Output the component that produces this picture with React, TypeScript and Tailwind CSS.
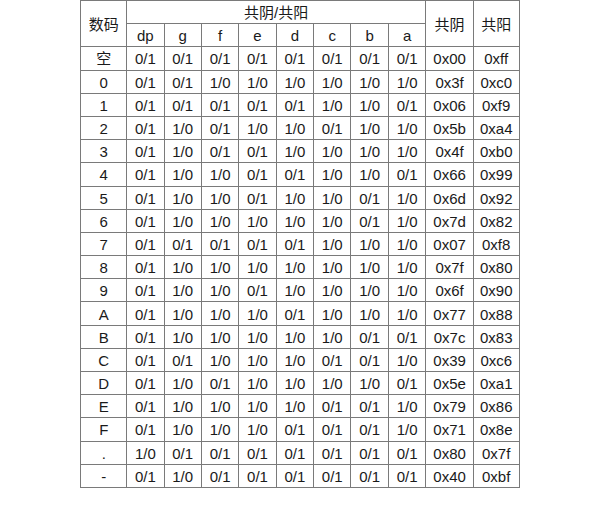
import React from 'react';

const segs = ['dp', 'g', 'f', 'e', 'd', 'c', 'b', 'a'];

// digit, segment bits dp..a (1 = lit on common-cathode), cathode code, anode code
const rows: [string, string, string, string][] = [
  ['空', '00000000', '0x00', '0xff'],
  ['0', '00111111', '0x3f', '0xc0'],
  ['1', '00000110', '0x06', '0xf9'],
  ['2', '01011011', '0x5b', '0xa4'],
  ['3', '01001111', '0x4f', '0xb0'],
  ['4', '01100110', '0x66', '0x99'],
  ['5', '01101101', '0x6d', '0x92'],
  ['6', '01111101', '0x7d', '0x82'],
  ['7', '00000111', '0x07', '0xf8'],
  ['8', '01111111', '0x7f', '0x80'],
  ['9', '01101111', '0x6f', '0x90'],
  ['A', '01110111', '0x77', '0x88'],
  ['B', '01111100', '0x7c', '0x83'],
  ['C', '00111001', '0x39', '0xc6'],
  ['D', '01011110', '0x5e', '0xa1'],
  ['E', '01111001', '0x79', '0x86'],
  ['F', '01110001', '0x71', '0x8e'],
  ['.', '10000000', '0x80', '0x7f'],
  ['-', '01000000', '0x40', '0xbf'],
];

const cell = 'border border-[#7a7a7a] text-center align-middle p-0 pt-px';

export default function App() {
  return (
    <div className="w-[600px] h-[512px] bg-white">
      <table
        className="mx-auto w-[438px] table-fixed border-collapse text-[15px] leading-none text-[#1a1a1a]"
        style={{ fontFamily: '"Liberation Sans", Arial, "Noto Sans CJK SC", sans-serif' }}
      >
        <colgroup>
          <col className="w-[45.7px]" />
          {segs.map((s) => (
            <col key={s} className="w-[37.4px]" />
          ))}
          <col className="w-[47.6px]" />
          <col className="w-[45.7px]" />
        </colgroup>
        <thead>
          <tr className="h-[23.2px]">
            <th rowSpan={2} className={`${cell} font-normal`}>数码</th>
            <th colSpan={8} className={`${cell} font-normal`}>共阴/共阳</th>
            <th rowSpan={2} className={`${cell} font-normal`}>共阴</th>
            <th rowSpan={2} className={`${cell} font-normal`}>共阳</th>
          </tr>
          <tr className="h-[23.2px]">
            {segs.map((s) => (
              <th key={s} className={`${cell} font-normal`}>{s}</th>
            ))}
          </tr>
        </thead>
        <tbody>
          {rows.map(([label, bits, cc, ca]) => (
            <tr key={label} className="h-[23.2px]">
              <td className={cell}>{label}</td>
              {bits.split('').map((b, i) => (
                <td key={i} className={cell}>{b === '1' ? '1/0' : '0/1'}</td>
              ))}
              <td className={cell}>{cc}</td>
              <td className={cell}>{ca}</td>
            </tr>
          ))}
        </tbody>
      </table>
    </div>
  );
}
